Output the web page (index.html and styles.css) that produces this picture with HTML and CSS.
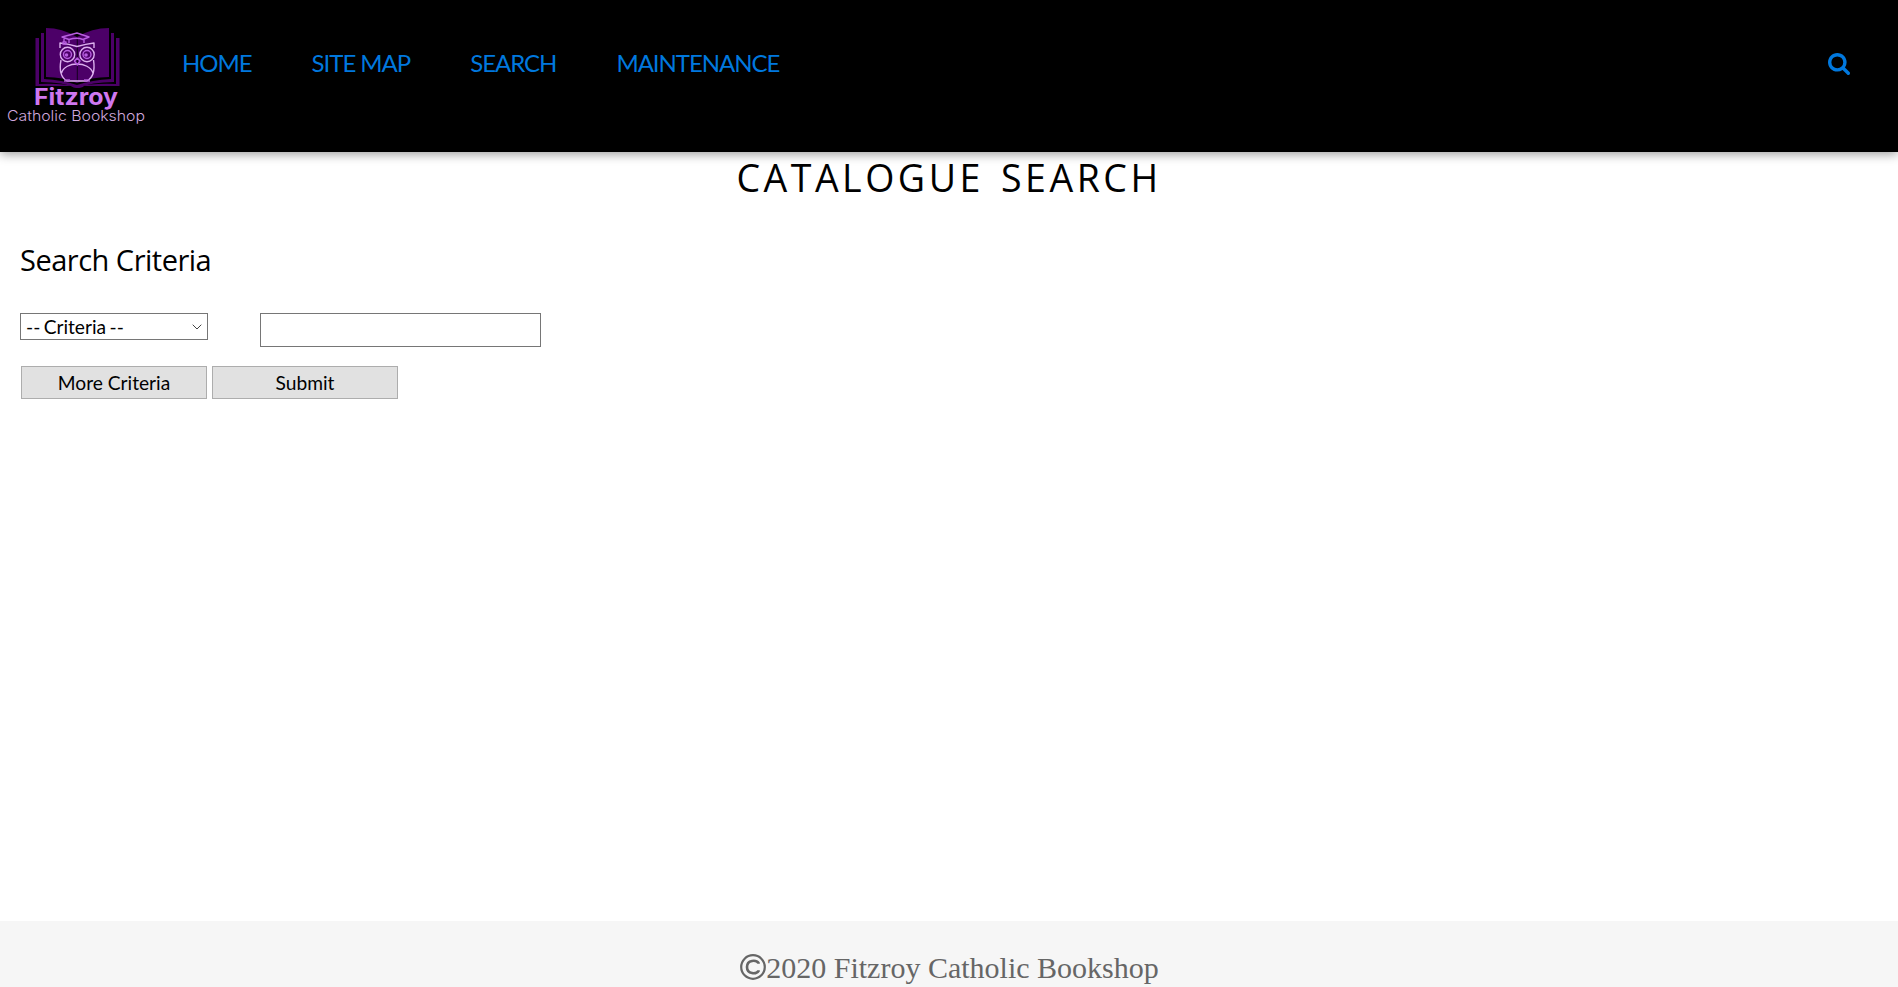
FILE: index.html
```html
<!DOCTYPE html>
<html lang="en">
<head>
<meta charset="utf-8">
<title>Catalogue Search</title>
<link rel="stylesheet" href="styles.css">
</head>
<body>
<header class="header">
  <a class="logo" href="#" aria-label="Fitzroy Catholic Bookshop">
    <svg width="160" height="140" viewBox="0 0 160 140">
      <g fill="#4c0068">
        <path d="M46 28Q62 28 77 37Q92 28 109 28V77Q91 77 77 83Q63 77 46 77Z"/>
        <path d="M41 33H44V79Q62 80 77 85Q92 80 111 79V33H114V82Q92 82 77 88Q63 82 41 82Z"/>
        <path d="M35.500 38H39V84Q62 83 77 87Q92 83 116 84V38H119.500V86H84Q82 88 77 88Q73 88 71 86H35.500Z"/>
      </g>
      <path d="M77.300 37V82" stroke="#16001f" stroke-width="1"/>
      <g fill="none" stroke="#dcb0ee" stroke-width="1.400" stroke-linejoin="round">
        <path d="M60 48V43Q69 44 77 46.500Q86 44 94 43V48"/>
        <circle cx="67.500" cy="54.500" r="7.200"/><circle cx="87" cy="54.500" r="7.200"/>
        <path d="M61 60Q58 76 67 81H87Q96 76 93.500 60M61.500 73C65 61 89 61 93 73"/>
      </g>
      <g fill="none" stroke="#b85ee0" stroke-width="1.400" stroke-linejoin="round">
        <path d="M62 37L77 33L89 37L83 39.500Q77 37 69 39.500ZM69 40V43M84 40V43M64 38V42M63 42V44H66V42Z"/>
        <circle cx="67.500" cy="54.500" r="4"/><circle cx="87" cy="54.500" r="4"/>
        <path d="M77.300 58L80 61L77.300 65L74.500 61Z"/>
        <path d="M65 79V82M67 79V82M69 79V82M85 79V82M87 79V82M89 79V82"/>
      </g>
      <g fill="#b85ee0"><circle cx="66.500" cy="55" r="1.800"/><circle cx="86" cy="55" r="1.800"/></g>
      <text class="logo-name" x="34" y="105" textLength="84" lengthAdjust="spacingAndGlyphs">Fitzroy</text>
      <text class="logo-sub" x="7" y="121" textLength="138" lengthAdjust="spacingAndGlyphs">Catholic Bookshop</text>
    </svg>
  </a>
  <nav class="nav">
    <a href="#">HOME</a>
    <a href="#">SITE MAP</a>
    <a href="#">SEARCH</a>
    <a href="#">MAINTENANCE</a>
  </nav>
  <a class="search-link" href="#" aria-label="Search">
    <svg width="22" height="22" viewBox="64 128 1664 1664"><path fill="#0078de" d="M1216 832q0-185-131.500-316.500T768 384 451.500 515.500 320 832t131.500 316.500T768 1280t316.500-131.500T1216 832zm512 832q0 52-38 90t-90 38q-54 0-90-38l-343-342q-179 124-399 124-143 0-273.500-55.500t-225-150-150-225T64 832t55.500-273.500 150-225 225-150T768 128t273.500 55.500 225 150 150 225T1472 832q0 220-124 399l343 343q37 37 37 90z"/></svg>
  </a>
</header>
<main class="main">
  <h1 class="title">CATALOGUE SEARCH</h1>
  <h2 class="subtitle">Search Criteria</h2>
  <form class="form">
    <div class="row">
      <div class="select" role="combobox" tabindex="0">
        <span>-- Criteria --</span>
        <svg width="10" height="6" viewBox="0 0 10 6"><path d="M.7.700L5 5L9.300.700" fill="none" stroke="#444" stroke-width="1"/></svg>
      </div>
      <input class="input" type="text" aria-label="Search text">
    </div>
    <div class="buttons">
      <button class="button" type="button">More Criteria</button>
      <button class="button" type="button">Submit</button>
    </div>
  </form>
</main>
<footer class="footer">
  <svg width="26" height="26" viewBox="0 0 26 26" fill="none" stroke="#666"><circle cx="13" cy="13" r="11.800" stroke-width="2.200"/><path d="M18.500 9.700V9C16.500 5.900 7 5.300 7 13S16.500 20.100 18.500 17V16.300" stroke-width="2.600"/></svg>
  <span class="footer-text">2020 Fitzroy Catholic Bookshop</span>
</footer>
</body>
</html>
```
FILE: styles.css
```css
* { box-sizing: border-box; }
body {
  margin: 0;
  height: 987px;
  overflow: hidden;
  display: flex;
  flex-direction: column;
  background: #fff;
  color: #000;
  font-family: Lato, sans-serif;
}
.header {
  flex: none;
  height: 152px;
  display: flex;
  align-items: flex-start;
  background: #000;
  box-shadow: 0 2px 10px rgba(0, 0, 0, .4);
}
.logo { width: 160px; height: 140px; }
.logo svg, .search-link svg { display: block; }
.logo-name { font: 700 23px Inter, sans-serif; fill: #cf78f0; }
.logo-sub { font: 300 14.5px Inter, sans-serif; fill: #cfa8de; }
.nav {
  display: flex;
  gap: 60px;
  padding: 48px 0 0 22px;
  font-size: 24px;
  line-height: 29px;
  letter-spacing: -1.03px;
}
.nav a { color: #0078de; text-decoration: none; white-space: nowrap; }
.search-link { margin: 53px 48px 0 auto; }
.main { flex: 1; padding: 0 20px; }
.title, .subtitle { margin: 0; font-family: "Open Sans", "Noto Sans", sans-serif; font-weight: 400; }
.title {
  height: 52px;
  text-align: center;
  font-size: 37.500px;
  line-height: 52px;
  letter-spacing: 3.500px;
  word-spacing: 4px;
}
.subtitle { margin-top: 36px; font-size: 29px; line-height: 40px; letter-spacing: -.5px; }
.form { margin-top: 33px; }
.row { display: flex; align-items: flex-start; gap: 52px; }
.select {
  width: 188px;
  height: 27px;
  display: flex;
  align-items: center;
  justify-content: space-between;
  padding: 0 5px;
  border: 1px solid #767676;
  font-size: 19.200px;
  word-spacing: -1.500px;
}
.input { width: 281px; height: 34px; border: 1px solid #767676; background: #fff; font: inherit; }
.buttons { display: flex; gap: 5px; margin: 19px 0 0 1px; }
.button {
  width: 186px;
  height: 33px;
  padding: 0;
  border: 1px solid #adadad;
  background: #e1e1e1;
  color: #000;
  font: 19.200px Lato, sans-serif;
}
.footer {
  flex: none;
  height: 66px;
  display: flex;
  justify-content: center;
  align-items: flex-start;
  padding: 33px 0 0 1px;
  background: #f6f6f6;
  color: #666;
}
.footer-text { font: 30px/34px "Liberation Serif", serif; margin-top: -3px; }
```
